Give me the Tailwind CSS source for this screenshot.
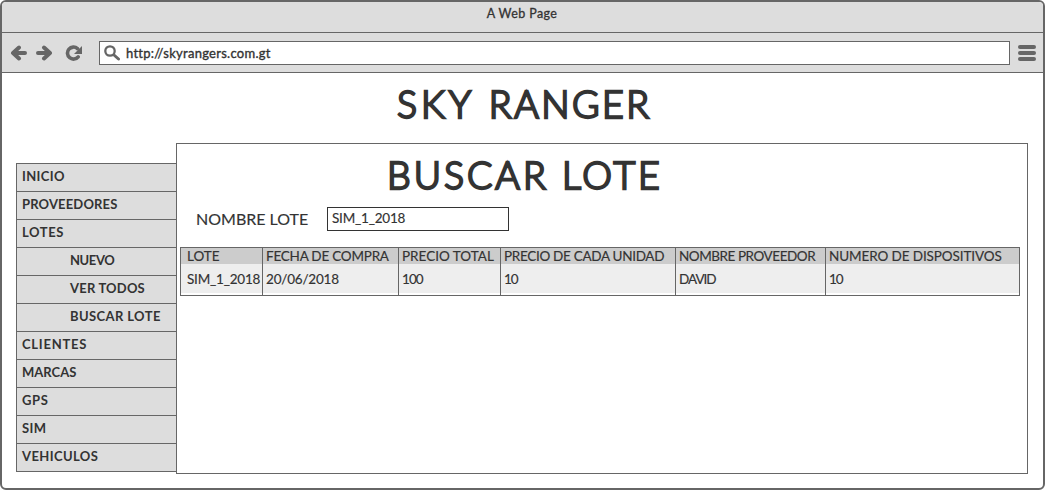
<!DOCTYPE html>
<html lang="es">
<head>
<meta charset="utf-8">
<title>A Web Page</title>
<script src="https://cdn.jsdelivr.net/npm/@tailwindcss/browser@4"></script>
</head>
<body class="bg-white font-['Lato','Noto_Sans',sans-serif] text-[#333]">
<div class="flex h-[490px] w-[1045px] flex-col overflow-hidden rounded-md border-2 border-[#666] bg-white">
  <header class="h-[31px] shrink-0 border-b border-[#666] bg-[#ddd] pt-[3px] pr-px text-center text-[12.5px] leading-[18px]"><span class="tracking-[0.4px] [-webkit-text-stroke:0.3px_#333]">A Web Page</span></header>
  <nav class="flex h-10 shrink-0 items-center border-b border-[#666] bg-[#ddd] pl-2 pr-[7px]">
    <svg class="h-4 w-[17px]" viewBox="0 0 17 16" fill="none" stroke="#666" stroke-width="4" stroke-linecap="round" stroke-linejoin="round"><path d="M9 2.500 3 8l6 5.500M4 8h11"/></svg>
    <svg class="ml-[9px] h-4 w-[17px]" viewBox="0 0 17 16" fill="none" stroke="#666" stroke-width="4" stroke-linecap="round" stroke-linejoin="round"><path d="M8 2.500 14 8l-6 5.500M13 8H2"/></svg>
    <svg class="ml-[12px] h-4 w-[18px]" viewBox="0 0 18 16" fill="none"><path d="M12.500 3.600A6 6 0 1 0 13.200 11.800" stroke="#666" stroke-width="3.600" stroke-linecap="round"/><path d="M17 1v8H9z" fill="#666"/></svg>
    <div class="ml-4 flex h-6 w-[911px] items-center border border-[#666] bg-white pl-1">
      <svg class="h-4 w-[17px]" viewBox="0 0 17 16" fill="none" stroke="#666"><circle cx="6" cy="6" r="4.700" stroke-width="2.300"/><path d="m10 10 4.500 4" stroke-width="3" stroke-linecap="round"/></svg>
      <span class="ml-[5px] text-[13px] leading-4 tracking-[0.27px] [-webkit-text-stroke:0.35px_#333]">http://skyrangers.com.gt</span>
    </div>
    <div class="ml-2 flex w-[18px] flex-col gap-[2px]"><i class="h-1 rounded-full bg-[#666]"></i><i class="h-1 rounded-full bg-[#666]"></i><i class="h-1 rounded-full bg-[#666]"></i></div>
  </nav>
  <h1 class="ml-[395px] mt-[7px] h-[48px] whitespace-nowrap text-[37.5px] leading-[47px] font-light tracking-[2.5px] [word-spacing:1px] [-webkit-text-stroke:2.3px_#333] [stroke-linejoin:round]"><span class="tracking-[4px]">SKY</span> RANGER</h1>
  <main class="mt-[15px] flex pl-[14px]">
    <ul class="mt-5 h-[309px] w-[160px] border-t border-l border-[#666] bg-[#ddd] text-[13px] leading-[25px] font-bold">
      <li class="h-7 border-b border-[#666] pl-[5px]"><span class="tracking-[0.35px]">INICIO</span></li>
      <li class="h-7 border-b border-[#666] pl-[5px]"><span class="tracking-[0.15px]">PROVEEDORES</span></li>
      <li class="h-7 border-b border-[#666] pl-[5px]"><span class="tracking-[0.6px]">LOTES</span></li>
      <li class="h-7 border-b border-[#666] pl-[53px]"><span class="tracking-[-0.4px]">NUEVO</span></li>
      <li class="h-7 border-b border-[#666] pl-[53px]"><span class="tracking-[0.2px]">VER TODOS</span></li>
      <li class="h-7 border-b border-[#666] pl-[53px]"><span class="tracking-[0.4px]">BUSCAR LOTE</span></li>
      <li class="h-7 border-b border-[#666] pl-[5px]"><span class="tracking-[0.75px]">CLIENTES</span></li>
      <li class="h-7 border-b border-[#666] pl-[5px]"><span class="tracking-[0px]">MARCAS</span></li>
      <li class="h-7 border-b border-[#666] pl-[5px]"><span class="tracking-[0.6px]">GPS</span></li>
      <li class="h-7 border-b border-[#666] pl-[5px]"><span class="tracking-[0.4px]">SIM</span></li>
      <li class="h-7 border-b border-[#666] pl-[5px]"><span class="tracking-[0.4px]">VEHICULOS</span></li>
    </ul>
    <section class="h-[331px] w-[852px] border border-[#666]">
      <h2 class="ml-[210px] mt-[7px] h-[48px] whitespace-nowrap text-[37.5px] leading-[47px] font-light tracking-[3px] [-webkit-text-stroke:2.3px_#333] [stroke-linejoin:round]">BUSCAR LOTE</h2>
      <div class="mt-[8px] flex h-6 items-center pl-[19px]">
        <label class="w-[131px] whitespace-nowrap text-[16px] [-webkit-text-stroke:0.15px_#333]">NOMBRE LOTE</label>
        <div class="h-6 w-[182px] border border-[#333] pl-1 text-[13.5px] leading-[20px]"><span class="tracking-[-0.2px] [-webkit-text-stroke:0.15px_#333]">SIM_1_2018</span></div>
      </div>
      <table class="ml-[3px] mt-4 h-[49px] w-[840px] table-fixed border-separate border-spacing-0 border border-[#666] bg-white text-left text-[13.5px] [-webkit-text-stroke:0.15px_#333]">
        <colgroup><col class="w-[82px]"><col class="w-[136px]"><col class="w-[102px]"><col class="w-[175px]"><col class="w-[150px]"><col class="w-[193px]"></colgroup>
        <tr class="h-4 bg-[#ccc] leading-4 whitespace-nowrap">
          <th class="border-r border-[#666] p-0 pl-[6px] font-normal"><span>LOTE</span></th>
          <th class="border-r border-[#666] p-0 pl-[3px] font-normal"><span class="tracking-[-0.22px]">FECHA DE COMPRA</span></th>
          <th class="border-r border-[#666] p-0 pl-[3px] font-normal"><span>PRECIO TOTAL</span></th>
          <th class="border-r border-[#666] p-0 pl-[3px] font-normal"><span class="tracking-[-0.3px]">PRECIO DE CADA UNIDAD</span></th>
          <th class="border-r border-[#666] p-0 pl-[3px] font-normal"><span class="tracking-[-0.45px]">NOMBRE PROVEEDOR</span></th>
          <th class="p-0 pl-[3px] font-normal"><span class="tracking-[-0.1px]">NUMERO DE DISPOSITIVOS</span></th>
        </tr>
        <tr class="h-[31px] bg-[linear-gradient(#eee_29px,#fff_29px)] leading-[28px] whitespace-nowrap">
          <td class="border-r border-[#666] p-0 pb-[2px] pl-[6px]"><span class="tracking-[-0.2px]">SIM_1_2018</span></td>
          <td class="border-r border-[#666] p-0 pb-[2px] pl-[3px]"><span class="tracking-[-0.2px]">20/06/2018</span></td>
          <td class="border-r border-[#666] p-0 pb-[2px] pl-[3px]"><span class="tracking-[-0.9px]">100</span></td>
          <td class="border-r border-[#666] p-0 pb-[2px] pl-[3px]"><span class="tracking-[-1px]">10</span></td>
          <td class="border-r border-[#666] p-0 pb-[2px] pl-[3px]"><span class="tracking-[-1px]">DAVID</span></td>
          <td class="p-0 pb-[2px] pl-[3px]"><span class="tracking-[-1px]">10</span></td>
        </tr>
      </table>
    </section>
  </main>
</div>
</body>
</html>
